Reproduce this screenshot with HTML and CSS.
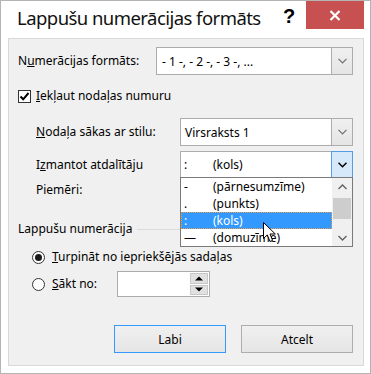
FILE: index.html
```html
<!DOCTYPE html>
<html lang="lv">
<head>
<meta charset="utf-8">
<link rel="stylesheet" href="styles.css">
</head>
<body>
<div class="window">
  <div class="titlebar">
    <div class="title">Lappušu numerācijas formāts</div>
    <div class="help">?</div>
    <div class="close">
      <svg width="12" height="11" viewBox="0 0 12 11"><path d="M1.5 1 L10.5 10 M10.5 1 L1.5 10" stroke="#fff" stroke-width="2.2" fill="none"/></svg>
    </div>
  </div>
  <div class="content">
    <div class="row r-format">
      <div class="lbl w138">N<span class="ak">u</span>merācijas formāts:</div>
      <div class="select">
        <div class="sel-text pad5">- 1 -, - 2 -, - 3 -, ...</div>
        <div class="sel-btn"><svg width="9" height="6" viewBox="0 0 9 6"><path d="M0.5 0.8 L4.5 4.8 L8.5 0.8" stroke="#707070" stroke-width="1.2" fill="none"/></svg></div>
      </div>
    </div>
    <div class="row r-check">
      <div class="checkbox"><svg width="11" height="11" viewBox="0 0 11 11"><path d="M1.5 5.5 L4.2 8.3 L9.5 2" stroke="#000" stroke-width="2" fill="none"/></svg></div>
      <div class="lbl chk-lbl"><span class="ak">I</span>ekļaut nodaļas numuru</div>
    </div>
    <div class="row r-style indent">
      <div class="lbl w144"><span class="ak">N</span>odaļa sākas ar stilu:</div>
      <div class="select">
        <div class="sel-text pad4">Virsraksts 1</div>
        <div class="sel-btn"><svg width="9" height="6" viewBox="0 0 9 6"><path d="M0.5 0.8 L4.5 4.8 L8.5 0.8" stroke="#707070" stroke-width="1.2" fill="none"/></svg></div>
      </div>
    </div>
    <div class="row r-sep indent">
      <div class="lbl w144">I<span class="ak">z</span>mantot atdalītāju</div>
      <div class="select">
        <div class="sel-text pad3"><span class="sym">:</span><span>(kols)</span></div>
        <div class="sel-btn hot"><svg width="9" height="6" viewBox="0 0 9 6"><path d="M0.5 0.8 L4.5 4.8 L8.5 0.8" stroke="#000" stroke-width="1.5" fill="none"/></svg></div>
      </div>
    </div>
    <div class="row r-ex indent">
      <div class="lbl">Piemēri:</div>
    </div>
    <div class="row r-group">
      <div class="lbl">Lappušu numerācija</div>
      <div class="gline"></div>
    </div>
    <div class="row r-radio1">
      <div class="radio on"><span class="dot"></span></div>
      <div class="lbl radio-lbl"><span class="ak">T</span>urpināt no iepriekšējās sadaļas</div>
    </div>
    <div class="row r-radio2">
      <div class="radio"></div>
      <div class="lbl radio-lbl w65"><span class="ak">S</span>ākt no:</div>
      <div class="spin">
        <div class="spin-btns">
          <div class="spin-btn"><svg width="8" height="5" viewBox="0 0 8 5"><path d="M0 4.5 L4 0.5 L8 4.5 Z" fill="#000"/></svg></div>
          <div class="spin-btn"><svg width="8" height="5" viewBox="0 0 8 5"><path d="M0 0.5 L4 4.5 L8 0.5 Z" fill="#000"/></svg></div>
        </div>
      </div>
    </div>
    <div class="row r-buttons">
      <div class="btn default">Labi</div>
      <div class="btn">Atcelt</div>
    </div>

    <div class="droplist">
      <div class="items">
        <div class="item"><span class="sym">-</span><span>(pārnesumzīme)</span></div>
        <div class="item"><span class="sym">.</span><span>(punkts)</span></div>
        <div class="item sel"><span class="sym">:</span><span>(kols)</span></div>
        <div class="item"><span class="sym">—</span><span>(domuzīme)</span></div>
      </div>
      <div class="scrollbar">
        <div class="sb-arrow"><svg width="9" height="6" viewBox="0 0 9 6"><path d="M0.5 5 L4.5 1 L8.5 5" stroke="#606060" stroke-width="1.3" fill="none"/></svg></div>
        <div class="sb-track"><div class="sb-thumb"></div></div>
        <div class="sb-arrow"><svg width="9" height="6" viewBox="0 0 9 6"><path d="M0.5 1 L4.5 5 L8.5 1" stroke="#606060" stroke-width="1.3" fill="none"/></svg></div>
      </div>
    </div>

    <svg class="cursor" width="14" height="22" viewBox="0 0 14 22"><path d="M0.5 0.5 L0.5 16.5 L4.3 12.9 L7 19.5 L9.6 18.4 L7 12 L12.3 12 Z" fill="#fff" stroke="#000" stroke-width="1" stroke-linejoin="miter"/></svg>
  </div>
</div>
</body>
</html>
```

FILE: styles.css
```css
* { box-sizing: border-box; }
html, body { margin: 0; padding: 0; }
body {
  width: 371px;
  height: 374px;
  background: #fff;
  font-family: "Noto Sans", "Open Sans", sans-serif;
  font-size: 12px;
  color: #000;
  overflow: hidden;
}
.window {
  width: 371px;
  height: 374px;
  border: 1px solid #b4b4b4;
  background: #fff;
}
.titlebar {
  height: 37px;
  display: flex;
  align-items: flex-start;
}
.title {
  flex: 1;
  min-width: 0;
  overflow: hidden;
  margin-left: 16px;
  margin-top: 3px;
  font-size: 18.5px;
  letter-spacing: -0.55px;
  line-height: 28px;
  color: #111;
  white-space: nowrap;
}
.help {
  width: 11px;
  font-family: "Liberation Sans", sans-serif;
  font-weight: bold;
  font-size: 20px;
  line-height: 20px;
  margin-top: 5px;
  margin-right: 12px;
  color: #000;
}
.close {
  width: 58px;
  height: 28px;
  margin-right: 6px;
  background: #c75050;
  display: flex;
  align-items: center;
  justify-content: center;
}
.close svg { display: block; }

.content {
  position: relative;
  margin-left: 7px;
  width: 356px;
  height: 328px;
  border: 1px solid #d9d9d9;
  background: #f0f0f0;
  padding: 8px 10px 10px 9px;
  display: flex;
  flex-direction: column;
}
.row {
  display: flex;
  align-items: center;
  flex: none;
}
.lbl { white-space: nowrap; line-height: 16px; }
.ak { text-decoration: underline; }
.w138 { width: 138px; flex: none; }
.w144 { width: 144px; flex: none; }
.w65 { width: 65px; flex: none; }
.indent { padding-left: 18px; }

.r-format { height: 28px; }
.r-check { height: 16px; margin-top: 13px; }
.r-style { height: 28px; margin-top: 14px; }
.r-sep { height: 27px; margin-top: 5px; }
.r-ex { height: 16px; margin-top: 4px; }
.r-group { height: 16px; margin-top: 23px; }
.r-radio1 { height: 16px; margin-top: 12px; padding-left: 14px; }
.r-radio2 { height: 26px; margin-top: 6px; padding-left: 14px; }
.r-buttons { height: 28px; margin-top: 28px; justify-content: flex-end; gap: 15px; }

.select {
  flex: 1;
  height: 100%;
  border: 1px solid #acacac;
  background: #fff;
  display: flex;
  align-items: stretch;
}
.sel-text {
  flex: 1;
  display: flex;
  align-items: center;
  white-space: nowrap;
}
.pad5 { padding-left: 5px; }
.pad4 { padding-left: 4px; }
.pad3 { padding-left: 3px; }
.sym { display: inline-block; width: 29px; flex: none; }
.sel-btn {
  width: 21px;
  border-left: 1px solid #acacac;
  background: linear-gradient(#f0f0f0, #e5e5e5);
  display: flex;
  align-items: center;
  justify-content: center;
}
.sel-btn.hot {
  background: #d6e9fa;
  border: 1px solid #569de5;
  margin: -1px -1px -1px 0;
  width: 22px;
}
.sel-btn svg { display: block; }

.checkbox {
  width: 13px;
  height: 13px;
  border: 1px solid #333;
  background: #fff;
  display: flex;
  align-items: center;
  justify-content: center;
  flex: none;
}
.checkbox svg { display: block; }
.chk-lbl { margin-left: 5px; }

.gline {
  flex: 1;
  height: 1px;
  background: #dcdcdc;
  margin-left: 5px;
}

.radio {
  width: 13px;
  height: 13px;
  border: 1px solid #333;
  border-radius: 50%;
  background: #fff;
  display: flex;
  align-items: center;
  justify-content: center;
  flex: none;
}
.radio .dot {
  width: 7px;
  height: 7px;
  border-radius: 50%;
  background: #1a1a1a;
}
.radio-lbl { margin-left: 7px; }

.spin {
  width: 93px;
  height: 26px;
  border: 1px solid #acacac;
  background: #fff;
  display: flex;
  justify-content: flex-end;
  padding: 1px 1px 1px 0;
}
.spin-btns {
  width: 18px;
  display: flex;
  flex-direction: column;
  gap: 1px;
}
.spin-btn {
  flex: 1;
  background: #e1e1e1;
  border: 1px solid #c8c8c8;
  display: flex;
  align-items: center;
  justify-content: center;
}
.spin-btn svg { display: block; }

.btn {
  width: 112px;
  height: 28px;
  border: 1px solid #adadad;
  background: linear-gradient(#f0f0f0, #e5e5e5);
  display: flex;
  align-items: center;
  justify-content: center;
  font-size: 12px;
}
.btn.default { border-color: #3399ff; }

.droplist {
  position: absolute;
  left: 171px;
  top: 138px;
  width: 173px;
  height: 70px;
  border: 1px solid #7a7a7a;
  background: #fff;
  display: flex;
}
.items { flex: 1; }
.item {
  height: 17px;
  display: flex;
  align-items: center;
  padding-left: 3px;
  white-space: nowrap;
  line-height: 16px;
}
.item.sel {
  background: #3399ff;
  color: #fff;
  outline: 1px dotted #e8a050;
  outline-offset: -1px;
}
.scrollbar {
  width: 20px;
  background: #f0f0f0;
  display: flex;
  flex-direction: column;
}
.sb-arrow {
  height: 17px;
  display: flex;
  align-items: center;
  justify-content: center;
}
.sb-arrow svg { display: block; }
.sb-track { flex: 1; padding: 3px 1px; }
.sb-thumb { height: 21px; background: #cdcdcd; }

.cursor {
  position: absolute;
  left: 254px;
  top: 183px;
}
```
